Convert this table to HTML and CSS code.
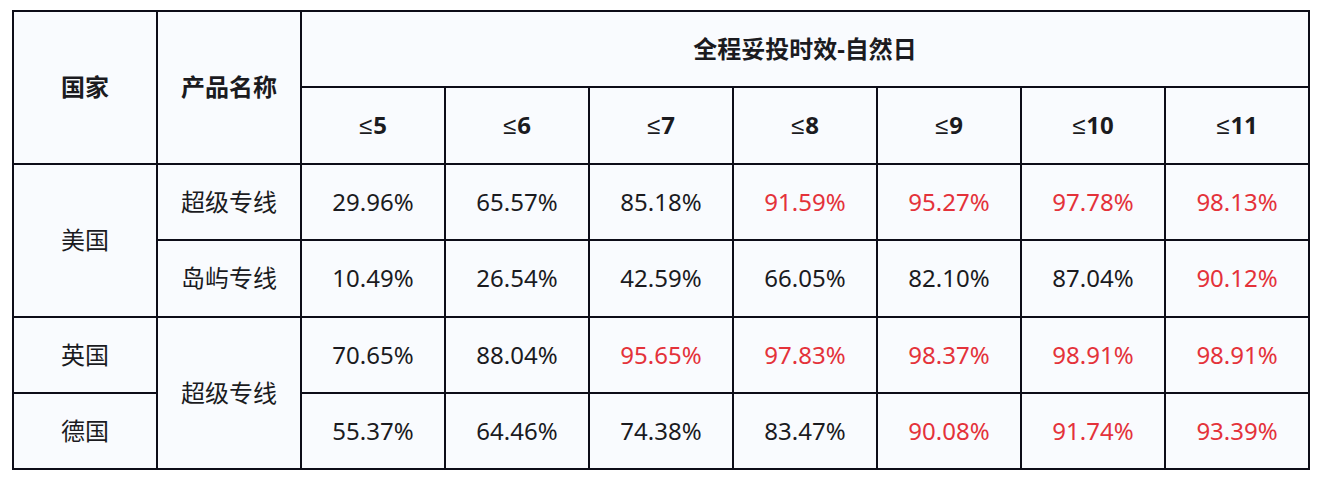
FILE: index.html
```html
<!DOCTYPE html>
<html lang="zh-CN">
<head>
<meta charset="utf-8">
<title>全程妥投时效</title>
<link rel="stylesheet" href="styles.css">
</head>
<body>
<div class="frame">
<table class="grid">
  <colgroup>
    <col><col><col><col><col><col><col><col><col>
  </colgroup>
  <thead>
    <tr>
      <th rowspan="2">国家</th>
      <th rowspan="2">产品名称</th>
      <th colspan="7">全程妥投时效-自然日</th>
    </tr>
    <tr>
      <th><span class="le">≤</span>5</th><th><span class="le">≤</span>6</th><th><span class="le">≤</span>7</th><th><span class="le">≤</span>8</th><th><span class="le">≤</span>9</th><th><span class="le">≤</span>10</th><th><span class="le">≤</span>11</th>
    </tr>
  </thead>
  <tbody>
    <tr>
      <td rowspan="2">美国</td>
      <td>超级专线</td>
      <td>29.96%</td><td>65.57%</td><td>85.18%</td>
      <td class="hi">91.59%</td><td class="hi">95.27%</td><td class="hi">97.78%</td><td class="hi">98.13%</td>
    </tr>
    <tr>
      <td>岛屿专线</td>
      <td>10.49%</td><td>26.54%</td><td>42.59%</td><td>66.05%</td><td>82.10%</td><td>87.04%</td>
      <td class="hi">90.12%</td>
    </tr>
    <tr>
      <td>英国</td>
      <td rowspan="2">超级专线</td>
      <td>70.65%</td><td>88.04%</td>
      <td class="hi">95.65%</td><td class="hi">97.83%</td><td class="hi">98.37%</td><td class="hi">98.91%</td><td class="hi">98.91%</td>
    </tr>
    <tr>
      <td>德国</td>
      <td>55.37%</td><td>64.46%</td><td>74.38%</td><td>83.47%</td>
      <td class="hi">90.08%</td><td class="hi">91.74%</td><td class="hi">93.39%</td>
    </tr>
  </tbody>
</table>
</div>
</body>
</html>
```
FILE: styles.css
```css
html, body {
  margin: 0;
  padding: 0;
  background: #ffffff;
}

.frame {
  padding: 10px 0 0 12px;
}

.grid {
  border-collapse: collapse;
  table-layout: fixed;
  width: 1298px;
  background: #f9fbfe;
  font-family: "Noto Sans", "Noto Sans CJK SC", sans-serif;
  font-size: 24px;
  color: #1b1b1f;
}

.grid col {
  width: 144px;
}

.grid th,
.grid td {
  border: 2px solid #0d0d18;
  height: 74.4px;
  padding: 0;
  text-align: center;
  vertical-align: middle;
  line-height: 1;
}

.grid th {
  font-weight: 700;
}

.grid .le {
  font-family: "Liberation Sans", sans-serif;
  font-weight: 400;
  font-size: 24px;
  margin-right: 1px;
}

.grid td.hi {
  color: #e4323a;
}
```
